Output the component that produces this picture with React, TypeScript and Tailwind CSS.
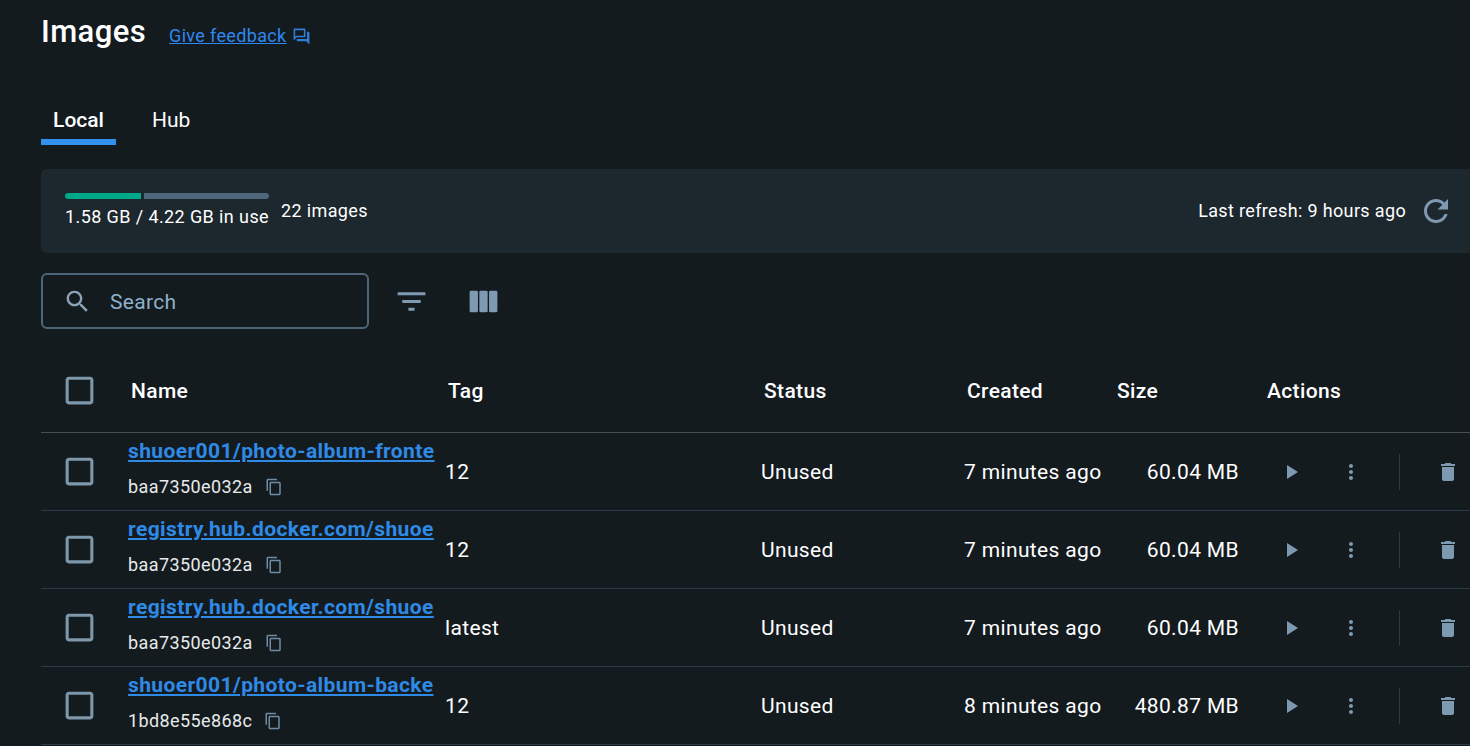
const ICON = {
  search:
    "M15.5 14h-.79l-.28-.27C15.41 12.59 16 11.11 16 9.5 16 5.91 13.09 3 9.5 3S3 5.91 3 9.5 5.91 16 9.5 16c1.61 0 3.09-.59 4.23-1.57l.27.28v.79l5 4.99L20.49 19l-4.99-5zm-6 0C7.01 14 5 11.99 5 9.5S7.01 5 9.5 5 14 7.01 14 9.5 11.99 14 9.5 14z",
  filter: "M10 18h4v-2h-4v2zM3 6v2h18V6H3zm3 7h12v-2H6v2z",
  refresh:
    "M17.65 6.35C16.2 4.9 14.21 4 12 4c-4.42 0-7.99 3.58-7.99 8s3.57 8 7.99 8c3.73 0 6.84-2.55 7.73-6h-2.08c-.82 2.33-3.04 4-5.65 4-3.31 0-6-2.69-6-6s2.69-6 6-6c1.66 0 3.14.69 4.22 1.78L13 11h7V4l-2.35 2.35z",
  play: "M8 5v14l11-7z",
  more: "M12 8c1.1 0 2-.9 2-2s-.9-2-2-2-2 .9-2 2 .9 2 2 2zm0 2c-1.1 0-2 .9-2 2s.9 2 2 2 2-.9 2-2-.9-2-2-2zm0 6c-1.1 0-2 .9-2 2s.9 2 2 2 2-.9 2-2-.9-2-2-2z",
  trash:
    "M6 19c0 1.1.9 2 2 2h8c1.1 0 2-.9 2-2V7H6v12zM19 4h-3.5l-1-1h-5l-1 1H5v2h14V4z",
  copy: "M16 1H4c-1.1 0-2 .9-2 2v14h2V3h12V1zm3 4H8c-1.1 0-2 .9-2 2v14c0 1.1.9 2 2 2h11c1.1 0 2-.9 2-2V7c0-1.1-.9-2-2-2zm0 16H8V7h11v14z",
  feedback:
    "M15 4v7H5.17L4 12.17V4h11m1-2H3c-.55 0-1 .45-1 1v14l4-4h10c.55 0 1-.45 1-1V3c0-.55-.45-1-1-1zm5 4h-2v9H6v2c0 .55.45 1 1 1h11l4 4V7c0-.55-.45-1-1-1z",
  checkbox:
    "M19 5v14H5V5h14m0-2H5c-1.1 0-2 .9-2 2v14c0 1.1.9 2 2 2h14c1.1 0 2-.9 2-2V5c0-1.1-.9-2-2-2z",
};

function Icon({ d, className }: { d: string; className: string }) {
  return (
    <svg viewBox="0 0 24 24" fill="currentColor" className={className}>
      <path d={d} />
    </svg>
  );
}

function ColumnsIcon({ className }: { className: string }) {
  return (
    <svg viewBox="0 0 24 24" fill="currentColor" className={className}>
      <rect x="3" y="5" width="5.4" height="14" rx="0.9" />
      <rect x="9.3" y="5" width="5.4" height="14" rx="0.9" />
      <rect x="15.6" y="5" width="5.4" height="14" rx="0.9" />
    </svg>
  );
}

// names are cut where the narrow column cuts them in the app
const images = [
  { name: "shuoer001/photo-album-fronte", id: "baa7350e032a", tag: "12", created: "7 minutes ago", size: "60.04 MB" },
  { name: "registry.hub.docker.com/shuoe", id: "baa7350e032a", tag: "12", created: "7 minutes ago", size: "60.04 MB" },
  { name: "registry.hub.docker.com/shuoe", id: "baa7350e032a", tag: "latest", created: "7 minutes ago", size: "60.04 MB" },
  { name: "shuoer001/photo-album-backe", id: "1bd8e55e868c", tag: "12", created: "8 minutes ago", size: "480.87 MB" },
];

function ImageRow({ image }: { image: (typeof images)[number] }) {
  return (
    <div className="flex h-[78px] items-center border-b border-[#2a3a47] text-[21px] tracking-[0.35px] text-white">
      <div className="flex w-[87px] shrink-0 pl-[20px]">
        <Icon d={ICON.checkbox} className="h-[37px] w-[37px] text-[#7e98ab]" />
      </div>
      <div className="w-[317px] shrink-0 pr-[11px]">
        <div className="-mt-[7px] text-[21px] leading-[24px] font-bold tracking-[0.4px] whitespace-nowrap text-[#2f8ae6] underline">
          {image.name}
        </div>
        <div className="mt-[14px] flex items-center text-[18px] leading-[20px] tracking-[0.4px] text-[#e7eaec]">
          {image.id}
          <Icon d={ICON.copy} className="ml-[12px] h-[18px] w-[18px] text-[#6f8ca3]" />
        </div>
      </div>
      <div className="w-[316px] shrink-0 pt-[2px]">{image.tag}</div>
      <div className="w-[203px] shrink-0 pt-[2px]">Unused</div>
      <div className="w-[150px] shrink-0 pt-[2px]">{image.created}</div>
      <div className="w-[125px] shrink-0 pt-[2px] text-right">{image.size}</div>
      <div className="flex items-center">
        <Icon d={ICON.play} className="ml-[40px] h-[24px] w-[24px] text-[#7e9ab2]" />
        <Icon d={ICON.more} className="ml-[36px] h-[24px] w-[24px] text-[#7e9ab2]" />
        <div className="ml-[36px] h-[36px] w-px bg-[#2a3a47]" />
        <Icon d={ICON.trash} className="ml-[36px] h-[24px] w-[24px] text-[#7e9ab2]" />
      </div>
    </div>
  );
}

export default function App() {
  return (
    <div className="h-[746px] overflow-hidden bg-[#141b1f] pl-[41px] font-['Roboto',sans-serif] text-white">
      <div className="flex items-start pt-[12px]">
        <h1 className="text-[31px] leading-[40px] font-medium tracking-[0.4px]">Images</h1>
        <a className="mt-[12px] ml-[23px] text-[18px] leading-[24px] tracking-[0.35px] text-[#2e88ef] underline">
          Give feedback
        </a>
        <Icon d={ICON.feedback} className="mt-[15px] ml-[5px] h-[19px] w-[19px] text-[#2e7fd6]" />
      </div>

      <div className="mt-[37px] flex h-[56px] items-stretch text-[21px]">
        <div className="flex w-[75px] justify-center border-b-[6px] border-[#3391ee] pt-[19px] leading-[24px] font-medium">
          Local
        </div>
        <div className="ml-[36px] pt-[19px] leading-[24px]">Hub</div>
      </div>

      <div className="mt-[24px] flex h-[84px] rounded-tl-[6px] rounded-bl-[6px] bg-[#1d272e] pr-[16px] pl-[24px] text-[18px] leading-[24px] tracking-[0.35px]">
        <div className="pt-[24px]">
          <div className="flex gap-[3px]">
            <div className="h-[6px] w-[76px] rounded-l-[3px] bg-[#00a88a]" />
            <div className="h-[6px] w-[125px] rounded-r-[3px] bg-[#4d667c]" />
          </div>
          <div className="mt-[6px] whitespace-nowrap tracking-[0.4px]">1.58 GB / 4.22 GB in use</div>
        </div>
        <div className="mt-[30px] ml-[12px]">22 images</div>
        <div className="mt-[30px] ml-auto">Last refresh: 9 hours ago</div>
        <Icon d={ICON.refresh} className="mt-[24px] ml-[12px] h-[36px] w-[36px] text-[#7e9ab2]" />
      </div>

      <div className="mt-[20px] flex items-center">
        <div className="flex h-[56px] w-[328px] items-center rounded-[6px] border-2 border-[#4d6579] pl-[20px]">
          <Icon d={ICON.search} className="h-[29px] w-[29px] text-[#8ba3b5]" />
          <span className="mt-[3px] ml-[18px] text-[21px] tracking-[0.3px] text-[#8fb0cb]">Search</span>
        </div>
        <Icon d={ICON.filter} className="ml-[24px] h-[37px] w-[37px] text-[#7e9ab2]" />
        <ColumnsIcon className="ml-[35px] h-[37px] w-[37px] text-[#7e9ab2]" />
      </div>

      <div className="mt-[26px] flex h-[78px] items-center border-b border-[#4a4f52] pb-[6px] text-[21px] font-medium tracking-[0.35px]">
        <div className="flex w-[87px] shrink-0 pl-[20px]">
          <Icon d={ICON.checkbox} className="h-[37px] w-[37px] text-[#7e98ab]" />
        </div>
        <div className="w-[317px] shrink-0 pt-[2px] pl-[3px]">Name</div>
        <div className="w-[316px] shrink-0 pt-[2px] pl-[3px]">Tag</div>
        <div className="w-[203px] shrink-0 pt-[2px] pl-[3px]">Status</div>
        <div className="w-[150px] shrink-0 pt-[2px] pl-[3px]">Created</div>
        <div className="w-[153px] shrink-0 pt-[2px] pl-[3px]">Size</div>
        <div className="pt-[2px]">Actions</div>
      </div>

      {images.map((image, i) => (
        <ImageRow key={i} image={image} />
      ))}
    </div>
  );
}
